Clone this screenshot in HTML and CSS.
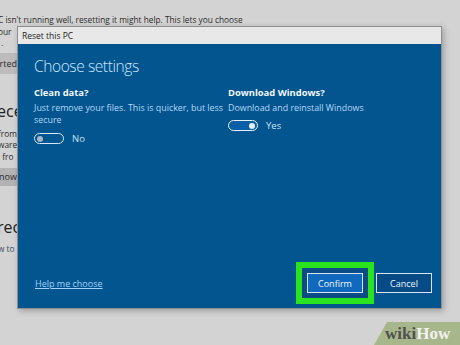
FILE: index.html
```html
<!DOCTYPE html>
<html lang="en">
  <head>
    <meta charset="utf-8">
    <title>Reset this PC</title>
    <link rel="stylesheet" href="styles.css">
  </head>
  <body>
    <div class="page">
      <p class="line first">C isn't running well, resetting it might help. This lets you choose</p>
      <p class="line">our</p>
      <p class="line dot">.</p>
      <div class="btn-bg">rted</div>
      <h2 class="sect">ece</h2>
      <p class="line">from</p>
      <p class="line">ware</p>
      <p class="line">i fro</p>
      <div class="btn-bg now">now</div>
      <h2 class="sect second">reco</h2>
      <p class="line link">w to</p>
    </div>

    <div class="dialog">
      <div class="titlebar">Reset this PC</div>
      <div class="body">
        <h1>Choose settings</h1>
        <div class="cols">
          <div class="opt">
            <h3>Clean data?</h3>
            <p>Just remove your files. This is quicker, but less secure</p>
            <div class="toggle-row">
              <span class="toggle off"><span class="knob"></span></span>
              <span>No</span>
            </div>
          </div>
          <div class="opt">
            <h3>Download Windows?</h3>
            <p>Download and reinstall Windows</p>
            <div class="toggle-row">
              <span class="toggle on"><span class="knob"></span></span>
              <span>Yes</span>
            </div>
          </div>
        </div>
        <div class="footer">
          <a href="#" class="help">Help me choose</a>
          <div class="buttons">
            <button class="confirm">Confirm</button>
            <button class="cancel">Cancel</button>
          </div>
        </div>
      </div>
    </div>

    <div class="wikihow"><span class="wiki">wiki</span><span class="how">How</span></div>
  </body>
</html>
```

FILE: styles.css
```css
html, body { margin: 0; height: 100%; }
body { background: #d3d3d3; font-family: "Open Sans", "Noto Sans", sans-serif; overflow: hidden; position: relative; }

/* settings page behind the dialog */
.page { padding-top: 14px; color: #2b2b2b; font-size: 8.3px; }
.page p { margin: 0; white-space: nowrap; }
.line { line-height: 11.5px; margin-left: -2px !important; }
.line.dot { margin-left: 1px !important; }
.btn-bg { width: 40px; height: 21px; margin: 4px 0 0 -23px; background: #bcbcbc; text-align: right; line-height: 21px; font-size: 9px; padding-right: 2px; }
.btn-bg.now { margin-top: 6px; height: 18px; line-height: 18px; background: #b3b3b3; }
.sect { margin: 28px 0 8px -3px; font-weight: 400; font-size: 16px; line-height: 18px; color: #222; }
.sect.second { margin-top: 32px; margin-bottom: 7px; }
.link { color: #394a5c; }

/* dialog */
.dialog { position: absolute; left: 17px; top: 26px; width: 425px; height: 283px; display: flex; flex-direction: column; border: 1px solid #8e8e8e; box-sizing: border-box; box-shadow: 2px 2px 6px rgba(0,0,0,0.25); }
.titlebar { height: 17px; background: #e8e8e8; color: #222; font-size: 8.5px; line-height: 17px; padding-left: 4px; }
.body { flex: 1; background: #02558f; padding: 11px 9px 15px 16px; display: flex; flex-direction: column; }
.body h1 { margin: 0 0 8px; font-weight: 300; font-size: 15.5px; letter-spacing: -0.4px; line-height: 23px; color: #cde6fb; }
.cols { display: grid; grid-template-columns: 194px 1fr; }
.opt h3 { margin: 0 0 3px; font-size: 9.4px; font-weight: 700; color: #f3f8fc; line-height: 13px; }
.opt p { margin: 0; font-size: 8.9px; line-height: 12px; color: #b4d8f6; width: 194px; }
.toggle-row { display: flex; align-items: center; gap: 8px; margin-top: 6px; color: #c8e2f8; font-size: 9.5px; }
.toggle { width: 24px; height: 9px; border: 1.5px solid #d4e8f8; border-radius: 7px; display: flex; align-items: center; padding: 0 2px; }
.toggle .knob { width: 6px; height: 6px; border-radius: 50%; background: #a9b7c4; }
.toggle.on { background: #0b5fa6; justify-content: flex-end; border-color: #e6f1fb; }
.toggle.on .knob { background: #e8f1f9; }
.opt:last-child .toggle-row { margin-top: 5px; }

.footer { margin-top: auto; display: flex; justify-content: space-between; align-items: center; }
.help { color: #a2d2f8; font-size: 9px; text-decoration: underline; margin-left: 1px; }
.buttons { display: flex; gap: 13px; }
.buttons button { width: 56px; height: 20px; box-sizing: border-box; font-family: inherit; font-size: 9px; color: #eef5fb; border: 1.5px solid #d6e6f3; padding: 0; }
.confirm { background: #1169bd; box-shadow: 0 0 0 5px #0b4c86, 0 0 0 11px #2ae21e; }
.cancel { background: #064b85; }

/* watermark */
.wikihow { position: absolute; right: 0; bottom: 0; width: 86px; height: 23px; background: #a8b78b; clip-path: polygon(13px 0, 100% 0, 100% 100%, 0 100%); font-family: "Liberation Serif", serif; font-weight: 700; font-size: 17px; line-height: 24px; padding-left: 11px; box-sizing: border-box; }
.wiki { color: #505050; }
.how { color: #f1f1ef; }
```
